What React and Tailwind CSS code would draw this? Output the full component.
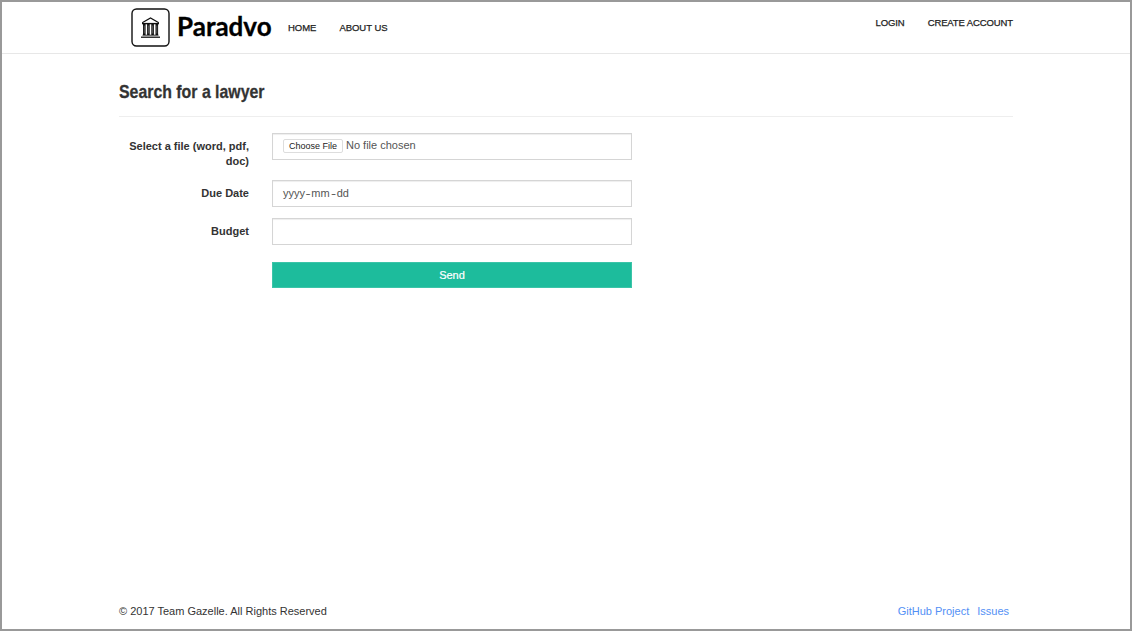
function BankLogo() {
  return (
    <svg width="39" height="39" viewBox="0 0 39 39" fill="none" stroke="#111" className="shrink-0">
      <rect x="1" y="1" width="37" height="37" rx="4.5" strokeWidth="1.4" />
      <path d="M11.2 14.8 L19.5 9.9 L27.8 14.8" strokeWidth="1.2" />
      <path d="M11 15.6 H28" strokeWidth="1.4" />
      <path d="M13.3 16 V27 M17.4 16 V27 M21.6 16 V27 M25.8 16 V27" strokeWidth="2.6" />
      <path d="M13.3 17.5 V25.5 M17.4 17.5 V25.5 M21.6 17.5 V25.5 M25.8 17.5 V25.5" stroke="#888" strokeWidth="0.6" />
      <path d="M11.5 27.2 H27.5" strokeWidth="0.9" />
      <path d="M10 29.2 H29" strokeWidth="1.3" />
    </svg>
  );
}

function Field({ label, className, children }) {
  return (
    <div className={`flex h-[27px] ${className}`}>
      <div className="w-[130px] shrink-0 pt-[6px] text-right font-bold leading-[15px] text-[#333]">{label}</div>
      <div className="ml-[23px] flex h-[27px] w-[360px] border border-[#d5d5d5] pl-[10px] leading-[25px] text-[#555] shadow-[inset_0_1px_1px_rgba(0,0,0,0.07)]">
        {children}
      </div>
    </div>
  );
}

export default function App() {
  return (
    <div className="flex h-[631px] w-[1132px] flex-col border-2 border-[#999] bg-white font-['Liberation_Sans',Arial,sans-serif] text-[11px] text-[#333]">
      <header className="flex h-[52px] shrink-0 items-start border-b border-[#e7e7e7] pl-[129px] pr-[117px] text-[9.5px] text-[#222]">
        <div className="mt-[6px] flex">
          <BankLogo />
          <span className="ml-[7px] mt-[1px] w-[95px] whitespace-nowrap font-[Lato,sans-serif] text-[26px] font-bold leading-[34px] text-black [-webkit-text-stroke:0.3px_#000]">Paradvo</span>
        </div>
        <nav className="mt-[19px] flex flex-1 gap-[23px] pl-[16px] leading-[14px] tracking-[-0.03px] [-webkit-text-stroke:0.25px_#222]">
          <a>HOME</a>
          <a>ABOUT US</a>
        </nav>
        <nav className="mt-[14px] flex gap-[23px] leading-[14px] tracking-[-0.11px] [-webkit-text-stroke:0.25px_#222]">
          <a>LOGIN</a>
          <a>CREATE ACCOUNT</a>
        </nav>
      </header>

      <main className="flex-1 pl-[117px] pr-[117px]">
        <div className="h-[63px] border-b border-[#eee] pt-[26px]">
          <h1 className="origin-left scale-x-[0.835] text-[19px] font-bold leading-[24px] [-webkit-text-stroke:0.3px_#333]">Search for a lawyer</h1>
        </div>
        <form>
          <Field label="Select a file (word, pdf, doc)" className="mt-[16px]">
            <span className="mt-[5px] h-[14px] w-[60px] rounded-[2px] border border-[#ddd] text-center text-[9px] leading-[13px] text-[#222]">Choose File</span>
            <span className="ml-[3px] leading-[22px]">No file chosen</span>
          </Field>
          <Field label="Due Date" className="mt-[20px]">
            <span>
              yyyy<span className="inline-block scale-x-[1.4] px-[1.3px]">-</span>mm<span className="inline-block scale-x-[1.4] px-[1.7px]">-</span>dd
            </span>
          </Field>
          <Field label="Budget" className="mt-[11px]" />
          <button type="button" className="ml-[153px] mt-[17px] block h-[26px] w-[360px] border border-[#3bc4a8] bg-[#1dbc9c] leading-[24px] text-white [-webkit-text-stroke:0.2px_#fff]">
            Send
          </button>
        </form>
      </main>

      <footer className="flex h-[25px] shrink-0 items-start justify-between pl-[117px] pr-[121px] leading-[14px]">
        <span>© 2017 Team Gazelle. All Rights Reserved</span>
        <span className="flex gap-[8px] text-[#5290f5]">
          <a>GitHub Project</a>
          <a>Issues</a>
        </span>
      </footer>
    </div>
  );
}
